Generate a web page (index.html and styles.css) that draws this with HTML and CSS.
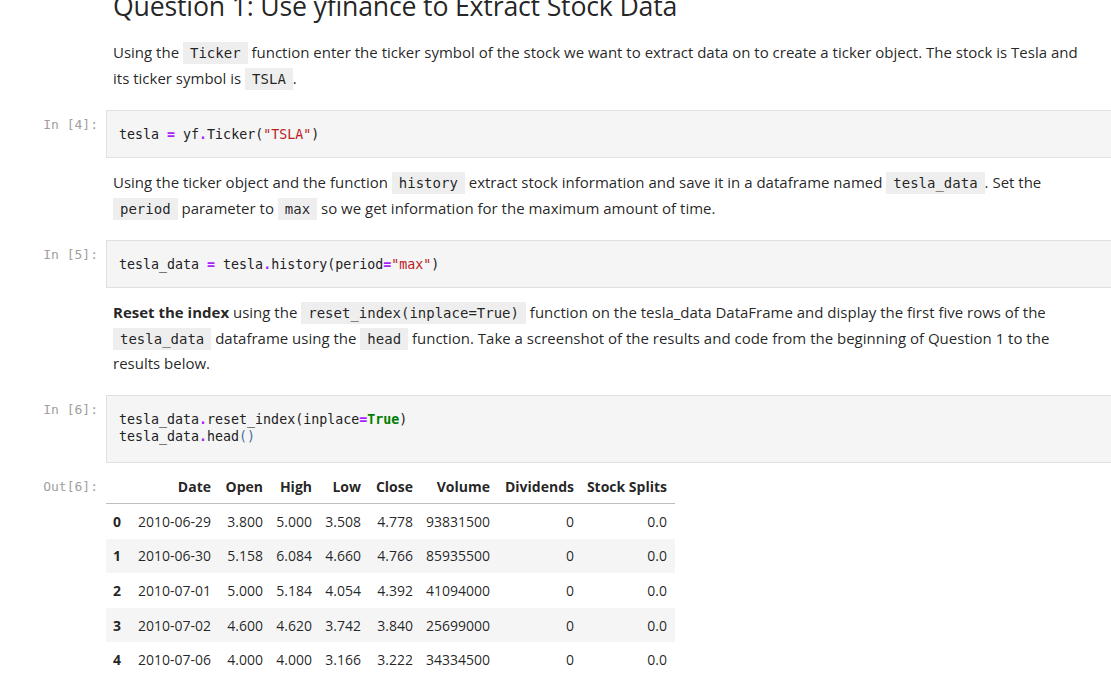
FILE: index.html
```html
<!DOCTYPE html>
<html>
<head>
<meta charset="utf-8">
<link rel="stylesheet" href="styles.css">
</head>
<body>
<div class="notebook">
  <div class="cell md first">
    <div class="prompt"></div>
    <div class="content">
      <h2 class="heading">Question 1: Use yfinance to Extract Stock Data</h2>
      <p>Using the <code>Ticker</code> function enter the ticker symbol of the stock we want to extract data on to create a ticker object. The stock is Tesla and its ticker symbol is <code>TSLA</code>.</p>
    </div>
  </div>

  <div class="cell code">
    <div class="prompt">In&nbsp;[4]:</div>
    <div class="content">
      <pre class="input">tesla <span class="op">=</span> yf<span class="op">.</span>Ticker(<span class="str">"TSLA"</span>)</pre>
    </div>
  </div>

  <div class="cell md">
    <div class="prompt"></div>
    <div class="content">
      <p>Using the ticker object and the function <code>history</code> extract stock information and save it in a dataframe named <code>tesla_data</code>. Set the <code>period</code> parameter to <code>max</code> so we get information for the maximum amount of time.</p>
    </div>
  </div>

  <div class="cell code">
    <div class="prompt">In&nbsp;[5]:</div>
    <div class="content">
      <pre class="input">tesla_data <span class="op">=</span> tesla<span class="op">.</span>history(period<span class="op">=</span><span class="str">"max"</span>)</pre>
    </div>
  </div>

  <div class="cell md">
    <div class="prompt"></div>
    <div class="content">
      <p><strong>Reset the index</strong> using the <code>reset_index(inplace=True)</code> function on the tesla_data DataFrame and display the first five rows of the <code>tesla_data</code> dataframe using the <code>head</code> function. Take a screenshot of the results and code from the beginning of Question 1 to the results below.</p>
    </div>
  </div>

  <div class="cell code last">
    <div class="prompt">In&nbsp;[6]:</div>
    <div class="content">
      <pre class="input">tesla_data<span class="op">.</span>reset_index(inplace<span class="op">=</span><span class="kw">True</span>)
tesla_data<span class="op">.</span>head<span class="br">()</span></pre>
    </div>
  </div>

  <div class="cell output">
    <div class="prompt out">Out[6]:</div>
    <div class="content">
      <table class="df">
        <colgroup>
          <col class="c-idx"><col class="c-date"><col class="c-open"><col class="c-high"><col class="c-low"><col class="c-close"><col class="c-vol"><col class="c-div"><col class="c-split">
        </colgroup>
        <thead>
          <tr><th></th><th>Date</th><th>Open</th><th>High</th><th>Low</th><th>Close</th><th>Volume</th><th>Dividends</th><th>Stock Splits</th></tr>
        </thead>
        <tbody>
          <tr><th>0</th><td>2010-06-29</td><td>3.800</td><td>5.000</td><td>3.508</td><td>4.778</td><td>93831500</td><td>0</td><td>0.0</td></tr>
          <tr><th>1</th><td>2010-06-30</td><td>5.158</td><td>6.084</td><td>4.660</td><td>4.766</td><td>85935500</td><td>0</td><td>0.0</td></tr>
          <tr><th>2</th><td>2010-07-01</td><td>5.000</td><td>5.184</td><td>4.054</td><td>4.392</td><td>41094000</td><td>0</td><td>0.0</td></tr>
          <tr><th>3</th><td>2010-07-02</td><td>4.600</td><td>4.620</td><td>3.742</td><td>3.840</td><td>25699000</td><td>0</td><td>0.0</td></tr>
          <tr><th>4</th><td>2010-07-06</td><td>4.000</td><td>4.000</td><td>3.166</td><td>3.222</td><td>34334500</td><td>0</td><td>0.0</td></tr>
        </tbody>
      </table>
    </div>
  </div>
</div>
</body>
</html>
```

FILE: styles.css
```css
html, body {
  margin: 0;
  padding: 0;
  background: #fff;
  overflow: hidden;
}

body {
  font-family: "Open Sans", "Noto Sans", sans-serif;
  color: rgba(0, 0, 0, 0.87);
  font-size: 15px;
}

.notebook {
  width: 1140px;
  margin-top: -10px;
}

.cell {
  display: flex;
}

.prompt {
  width: 106px;
  flex: 0 0 106px;
  box-sizing: border-box;
  padding: 6px 8px 0 0;
  text-align: right;
  font-family: "DejaVu Sans Mono", monospace;
  font-size: 13px;
  line-height: 17px;
  color: #a0a0a0;
}

.content {
  flex: 1;
  min-width: 0;
}

/* markdown cells */
.md .content {
  padding: 0 52px 18.5px 7px;
}

.md p {
  margin: 0;
  line-height: 25.5px;
}

.heading {
  margin: 0 0 18px;
  font-size: 26.7px;
  font-weight: 500;
  line-height: 32px;
  color: rgba(0, 0, 0, 0.87);
  letter-spacing: -0.2px;
}

code {
  font-family: "DejaVu Sans Mono", monospace;
  font-size: 14px;
  line-height: 1;
  background: #eeeeee;
  padding: 3px 7px;
  color: rgba(0, 0, 0, 0.87);
}

strong {
  font-weight: 700;
}

/* code cells */
.code {
  margin-bottom: 12.5px;
}

.code.last {
  margin-bottom: 8px;
}

.input {
  margin: 0;
  background: #f5f5f5;
  border: 1px solid #e0e0e0;
  border-right: none;
  padding: 15px 12px 14px;
  font-family: "DejaVu Sans Mono", monospace;
  font-size: 13.3px;
  line-height: 17px;
  color: #212121;
}

.code.last .input {
  padding-bottom: 16.5px;
}

.op {
  color: #aa22ff;
  font-weight: 700;
}

.str {
  color: #ba2121;
}

.kw {
  color: #008000;
  font-weight: 700;
}

.br {
  color: #4d6a9e;
}

/* output */
.prompt.out {
  padding-top: 7.5px;
}

.df {
  border-collapse: collapse;
  table-layout: fixed;
  width: 569px;
  font-size: 14px;
  color: rgba(0, 0, 0, 0.87);
}

.c-idx { width: 23px; }
.c-date { width: 90px; }
.c-open { width: 52px; }
.c-high { width: 49px; }
.c-low { width: 49px; }
.c-close { width: 52px; }
.c-vol { width: 77px; }
.c-div { width: 84px; }
.c-split { width: 93px; }

.df th,
.df td {
  text-align: right;
  padding: 8.8px 8px 8.8px 0;
  line-height: 17px;
  white-space: nowrap;
  overflow: visible;
}

.df thead th {
  font-weight: 700;
  padding-top: 7px;
  padding-bottom: 8.5px;
  border-bottom: 1px solid #bdbdbd;
}

.df tbody th {
  text-align: left;
  padding-left: 7px;
  font-weight: 700;
}

.df tbody tr:nth-child(even) {
  background: #f5f5f5;
}
```
